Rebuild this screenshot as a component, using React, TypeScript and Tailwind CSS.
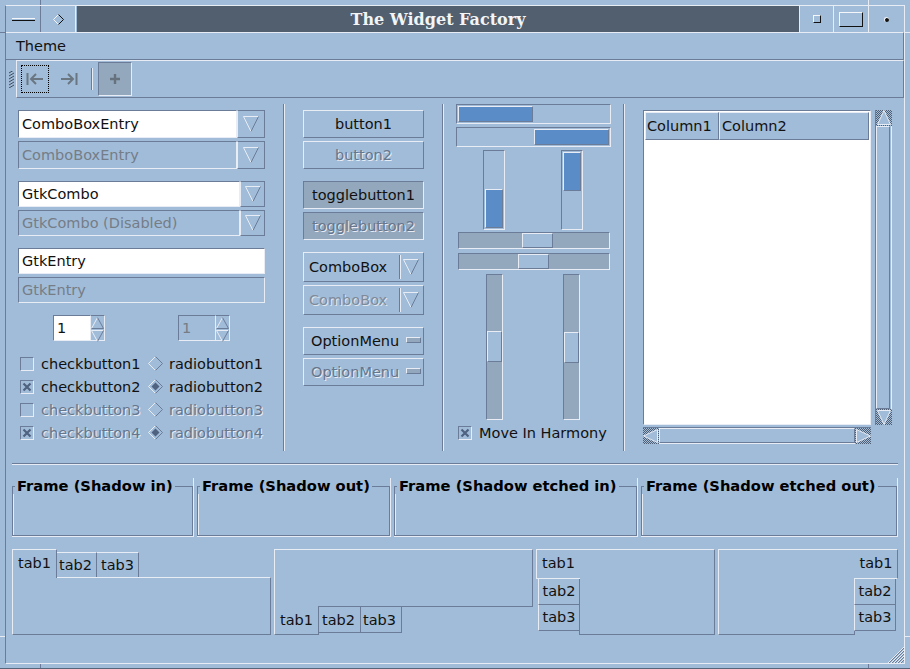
import type { ReactNode } from "react";

// GTK "Redmond"-style bevels
const raised = "border border-t-[#e8ecf5] border-l-[#e8ecf5] border-r-[#6b7c99] border-b-[#6b7c99]";
const sunken = "border border-t-[#6b7c99] border-l-[#6b7c99] border-r-[#e8ecf5] border-b-[#e8ecf5]";
const shadowText = "text-[#66768c] [text-shadow:1px_1px_0_#e8ecf5]";

function DownArrow({ size = 16 }: { size?: number }) {
  return (
    <svg width={size} height={size} viewBox="0 0 16 16" className="shrink-0">
      <path d="M0.5 0.5H15.5" stroke="#e8ecf5" fill="none" />
      <path d="M0.5 0.5L8 15.5" stroke="#e8ecf5" fill="none" />
      <path d="M15.5 0.5L8 15.5" stroke="#6b7c99" fill="none" />
    </svg>
  );
}

function ComboEntry({ text, disabled, entryW, h }: { text: string; disabled?: boolean; entryW: number; h: string }) {
  return (
    <div className={`flex ${h}`}>
      <div
        style={{ width: entryW }}
        className={`${sunken} flex items-center pl-[3px] ${disabled ? "text-[#757d87]" : "bg-white text-[#111]"}`}
      >
        {text}
      </div>
      <div className="flex-1 flex items-center justify-center border border-l-[#e8ecf5] border-t-[#6b7c99] border-r-[#6b7c99] border-b-[#6b7c99]">
        <DownArrow />
      </div>
    </div>
  );
}

function SpinArrow({ up }: { up?: boolean }) {
  return (
    <div className="h-[13px] flex items-center justify-center">
      <svg width="13" height="12" viewBox="0 0 13 12">
        {up ? (
          <>
            <path d="M0.5 11.5L6.5 0.5" stroke="#e8ecf5" fill="none" />
            <path d="M6.5 0.5L12.5 11.5H0.5" stroke="#6b7c99" fill="none" />
          </>
        ) : (
          <>
            <path d="M0.5 0.5H12.5" stroke="#e8ecf5" fill="none" />
            <path d="M0.5 0.5L6.5 11.5" stroke="#e8ecf5" fill="none" />
            <path d="M12.5 0.5L6.5 11.5" stroke="#6b7c99" fill="none" />
          </>
        )}
      </svg>
    </div>
  );
}

function Spin({ disabled }: { disabled?: boolean }) {
  return (
    <div className="flex h-[26px] w-[52px]">
      <div className={`${sunken} w-[38px] flex items-center pl-[3px] ${disabled ? "text-[#757d87]" : "bg-white text-[#111]"}`}>1</div>
      <div className="w-[14px] border-t border-r border-t-[#6b7c99] border-r-[#e8ecf5] border-b border-b-[#e8ecf5]">
        <SpinArrow up />
        <SpinArrow />
      </div>
    </div>
  );
}

function CheckBox({ checked }: { checked?: boolean }) {
  return (
    <div className={`${sunken} w-[14px] h-[14px] flex items-center justify-center shrink-0`}>
      {checked && (
        <svg width="10" height="10" viewBox="0 0 10 10">
          <path d="M1.5 1.5L8.5 8.5M8.5 1.5L1.5 8.5" stroke="#4f6280" strokeWidth="2.2" fill="none" />
        </svg>
      )}
    </div>
  );
}

function Radio({ checked }: { checked?: boolean }) {
  return (
    <svg width="15" height="15" viewBox="0 0 15 15" className="shrink-0">
      <path d="M7.5 0.5L0.5 7.5L7.5 14.5" stroke="#e8ecf5" fill="none" />
      <path d="M7.5 0.5L14.5 7.5L7.5 14.5" stroke="#6b7c99" fill="none" />
      {checked && <path d="M7.5 3.5L11.5 7.5L7.5 11.5L3.5 7.5Z" fill="#4f6280" />}
    </svg>
  );
}

function Btn({ label, disabled, pressed }: { label: string; disabled?: boolean; pressed?: boolean }) {
  return (
    <div
      className={`h-[28px] flex items-center justify-center ${pressed ? sunken + " bg-[#93a8bd]" : raised} ${
        disabled ? shadowText : "text-[#111]"
      }`}
    >
      {label}
    </div>
  );
}

function ComboBox({ disabled }: { disabled?: boolean }) {
  return (
    <div className={`${raised} h-[30px] flex items-center pl-[5px] ${disabled ? "text-[#7f8a98] [text-shadow:1px_1px_0_#dfe6f0]" : "text-[#111]"}`}>
      <span className="flex-1">ComboBox</span>
      <div className="w-[1px] h-[24px] bg-[#6b7c99]" />
      <div className="w-[1px] h-[24px] bg-[#e8ecf5] mr-[2px]" />
      <div className="mr-[4px]">
        <DownArrow />
      </div>
    </div>
  );
}

function OptionMenu({ disabled }: { disabled?: boolean }) {
  return (
    <div className={`${raised} h-[28px] flex items-center pl-[7px] ${disabled ? shadowText : "text-[#111]"}`}>
      <span className="flex-1">OptionMenu</span>
      <div className={`${raised} w-[15px] h-[6px] mr-[2px] mb-[2px] bg-[#93a8bd]`} />
    </div>
  );
}

function VSep() {
  return (
    <div className="flex h-[347px] w-[2px] shrink-0">
      <div className="w-[1px] bg-[#6b7c99]" />
      <div className="w-[1px] bg-[#e8ecf5]" />
    </div>
  );
}

function Hatch({ dir }: { dir: "up" | "down" | "left" | "right" }) {
  const id = `hatch-${dir}`;
  const tri = {
    up: "M8 0.5L14.5 14.5H1.5Z",
    down: "M8 15.5L14.5 1.5H1.5Z",
    left: "M0.5 8L14.5 1.5V14.5Z",
    right: "M15.5 8L1.5 1.5V14.5Z",
  }[dir];
  return (
    <svg width="16" height="16" viewBox="0 0 16 16" className="shrink-0 block">
      <defs>
        <pattern id={id} width="2" height="2" patternUnits="userSpaceOnUse">
          <rect width="2" height="2" fill="#a1bcd8" />
          <rect width="1" height="1" fill="#4f5e73" />
          <rect x="1" y="1" width="1" height="1" fill="#4f5e73" />
        </pattern>
      </defs>
      <rect width="16" height="16" fill={`url(#${id})`} />
      <path d={tri} fill="#a1bcd8" stroke="#e8ecf5" />
    </svg>
  );
}

function Frame({ label, width }: { label: string; width: string }) {
  return (
    <div className={`${width} h-[59px] border-r border-b border-r-[#e8ecf5] border-b-[#e8ecf5] shrink-0`}>
      <fieldset className="h-[58px] border border-[#6b7c99]">
        <legend className="ml-[2px] px-[2px] font-bold text-[14.7px] text-black leading-[16px] whitespace-nowrap">{label}</legend>
        <div className="h-[41px] border-l border-l-[#e8ecf5]" />
      </fieldset>
    </div>
  );
}

function Tab({ className, children }: { className: string; children: ReactNode }) {
  return <div className={`flex items-center justify-center text-[#111] shrink-0 ${className}`}>{children}</div>;
}

export default function App() {
  return (
    <div className="relative w-[910px] h-[669px] overflow-hidden bg-[#a1bcd8] border-b border-b-[#56657a] text-[14.5px] leading-[18px] font-['DejaVu_Sans',sans-serif]">
      {/* frame handles */}
      <div className="absolute left-[40px] top-0 w-[1px] h-[6px] bg-[#6b7c99]" />
      <div className="absolute left-[868px] top-0 w-[1px] h-[6px] bg-[#e8ecf5]" />
      <div className="absolute left-[40px] bottom-0 w-[1px] h-[5px] bg-[#6b7c99]" />
      <div className="absolute left-[868px] bottom-0 w-[1px] h-[5px] bg-[#6b7c99]" />
      <div className="absolute left-0 top-[32px] w-[5px] h-[1px] bg-[#6b7c99]" />
      <div className="absolute right-0 top-[32px] w-[5px] h-[1px] bg-[#e8ecf5]" />
      <div className="absolute left-0 top-[636px] w-[5px] h-[1px] bg-[#e8ecf5]" />
      <div className="absolute right-0 top-[636px] w-[5px] h-[1px] bg-[#e8ecf5]" />

      <div className="relative mt-[5px] ml-[5px] w-[900px] h-[659px] border border-t-[#e8ecf5] border-l-[#6b7c99] border-r-[#e8ecf5] border-b-[#e8ecf5]">
        {/* title bar */}
        <div className="flex h-[26px]">
          <div className="w-[35px] flex items-center justify-center border-r border-r-[#6b7c99]">
            <div className="w-[23px] h-[3px] border-t border-b border-t-[#f4f6fa] border-b-[#111]" />
          </div>
          <div className="w-[35px] flex items-center justify-center border-r border-r-[#e8ecf5]">
            <svg width="11" height="11" viewBox="0 0 11 11">
              <path d="M5.5 0.5L0.5 5.5L5.5 10.5" stroke="#f4f6fa" fill="none" />
              <path d="M5.5 0.5L10.5 5.5L5.5 10.5" stroke="#111" fill="none" />
            </svg>
          </div>
          <div className="w-[1px]" />
          <div className="w-[722px] pt-[2px] bg-[#515f6e] flex items-center justify-center text-[#f2f4f6] font-bold text-[16px] font-['DejaVu_Serif',serif]">
            The Widget Factory
          </div>
          <div className="w-[35px] flex items-center justify-center border-l border-r border-l-[#e8ecf5] border-r-[#e8ecf5]">
            <div className="w-[8px] h-[8px] border border-t-[#f4f6fa] border-l-[#f4f6fa] border-r-[#111] border-b-[#111]" />
          </div>
          <div className="w-[35px] flex items-center justify-center border-r border-r-[#e8ecf5]">
            <div className="w-[24px] h-[15px] border border-t-[#f4f6fa] border-l-[#f4f6fa] border-r-[#111] border-b-[#111]" />
          </div>
          <div className="flex-1 flex items-center justify-center">
            <div className="w-[5px] h-[5px] rounded-full bg-[#111] border-t border-l border-t-[#f4f6fa] border-l-[#f4f6fa]" />
          </div>
        </div>

        {/* menu bar */}
        <div className="h-[28px] flex items-center pl-[10px] border-t border-b border-r border-t-[#e8ecf5] border-b-[#6b7c99] border-r-[#6b7c99] text-[#111]">
          Theme
        </div>

        {/* toolbar */}
        <div className="flex h-[38px]">
          <div className="w-[10px] flex items-center justify-center">
            <svg width="7" height="17" viewBox="0 0 7 17">
              {[0, 3, 6, 9, 12, 15].map((y) => (
                <path key={y} d={`M1 ${y + 2}L6 ${y - 1}`} stroke="#3f4b5b" fill="none" />
              ))}
            </svg>
          </div>
          <div className="flex-1 flex items-center pl-[4px] border-t border-l border-b border-r border-t-[#e8ecf5] border-l-[#e8ecf5] border-b-[#6b7c99] border-r-[#6b7c99]">
            <div className="w-[28px] h-[28px] border border-dotted border-black flex items-center justify-center">
              <svg width="18" height="14" viewBox="0 0 18 14">
                <path d="M1.5 1V13M17 7H5M10 2L5 7L10 12" stroke="#6a7782" strokeWidth="2" fill="none" />
              </svg>
            </div>
            <div className="w-[40px] flex items-center justify-center">
              <svg width="18" height="14" viewBox="0 0 18 14">
                <path d="M16.5 1V13M1 7H13M8 2L13 7L8 12" stroke="#6a7782" strokeWidth="2" fill="none" />
              </svg>
            </div>
            <div className="flex w-[2px] h-[22px] ml-[2px]">
              <div className="w-[1px] bg-[#6b7c99]" />
              <div className="w-[1px] bg-[#e8ecf5]" />
            </div>
            <div className={`${sunken} ml-[5px] w-[34px] h-[34px] bg-[#93a8bd] flex items-center justify-center`}>
              <svg width="12" height="12" viewBox="0 0 12 12">
                <path d="M6 1V11M1 6H11" stroke="#66737f" strokeWidth="2.4" fill="none" />
              </svg>
            </div>
          </div>
        </div>

        {/* widgets */}
        <div className="flex h-[365px] pt-[6px] pl-[12px]">
          <div className="w-[247px] shrink-0 pt-[6px]">
            <ComboEntry text="ComboBoxEntry" entryW={219} h="h-[28px]" />
            <div className="mt-[3px]">
              <ComboEntry text="ComboBoxEntry" entryW={219} h="h-[28px]" disabled />
            </div>
            <div className="mt-[12px]">
              <ComboEntry text="GtkCombo" entryW={222} h="h-[26px]" />
            </div>
            <div className="mt-[3px]">
              <ComboEntry text="GtkCombo (Disabled)" entryW={222} h="h-[26px]" disabled />
            </div>
            <div className={`${sunken} mt-[12px] h-[26px] bg-white text-[#111] flex items-center pl-[3px]`}>GtkEntry</div>
            <div className={`${sunken} mt-[3px] h-[26px] text-[#757d87] flex items-center pl-[3px]`}>GtkEntry</div>
            <div className="flex mt-[12px] pl-[35px] gap-[73px]">
              <Spin />
              <Spin disabled />
            </div>
            <div className="mt-[14px] pl-[2px] flex flex-col gap-[6px]">
              {[
                { n: 1, checked: false, off: false },
                { n: 2, checked: true, off: false },
                { n: 3, checked: false, off: true },
                { n: 4, checked: true, off: true },
              ].map((r) => (
                <div key={r.n} className={`flex items-center h-[17px] ${r.off ? shadowText : "text-[#111]"}`}>
                  <CheckBox checked={r.checked} />
                  <span className="ml-[7px] w-[107px]">checkbutton{r.n}</span>
                  <Radio checked={r.checked} />
                  <span className="ml-[6px]">radiobutton{r.n}</span>
                </div>
              ))}
            </div>
          </div>

          <div className="ml-[18px]">
            <VSep />
          </div>

          <div className="ml-[18px] w-[121px] shrink-0 pt-[6px]">
            <Btn label="button1" />
            <div className="mt-[3px]">
              <Btn label="button2" disabled />
            </div>
            <div className="mt-[12px]">
              <Btn label="togglebutton1" pressed />
            </div>
            <div className="mt-[3px]">
              <Btn label="togglebutton2" pressed disabled />
            </div>
            <div className="mt-[12px]">
              <ComboBox />
            </div>
            <div className="mt-[3px]">
              <ComboBox disabled />
            </div>
            <div className="mt-[12px]">
              <OptionMenu />
            </div>
            <div className="mt-[3px]">
              <OptionMenu disabled />
            </div>
          </div>

          <div className="ml-[18px]">
            <VSep />
          </div>

          <div className="ml-[12px] w-[155px] shrink-0">
            <div className={`${sunken} h-[20px] p-px`}>
              <div className={`${raised} w-[75px] h-full bg-[#5a8dc8]`} />
            </div>
            <div className={`${sunken} h-[20px] p-px mt-[3px] flex justify-end`}>
              <div className={`${raised} w-[75px] h-full bg-[#5a8dc8]`} />
            </div>
            <div className="flex mt-[3px] pl-[27px] gap-[56px]">
              <div className={`${sunken} w-[22px] h-[80px] p-px flex flex-col justify-end`}>
                <div className={`${raised} h-[39px] bg-[#5a8dc8]`} />
              </div>
              <div className={`${sunken} w-[22px] h-[80px] p-px`}>
                <div className={`${raised} h-[39px] bg-[#5a8dc8]`} />
              </div>
            </div>
            <div className={`${sunken} ml-[2px] mt-[2px] w-[152px] h-[17px] bg-[#93a8bd] flex pl-[63px]`}>
              <div className={`${raised} w-[31px] bg-[#a1bcd8]`} />
            </div>
            <div className={`${sunken} ml-[2px] mt-[4px] w-[152px] h-[17px] bg-[#93a8bd] flex pl-[59px]`}>
              <div className={`${raised} w-[31px] bg-[#a1bcd8]`} />
            </div>
            <div className="flex mt-[4px] pl-[30px] gap-[60px]">
              <div className={`${sunken} w-[17px] h-[146px] bg-[#93a8bd] pt-[56px]`}>
                <div className={`${raised} h-[31px] bg-[#a1bcd8]`} />
              </div>
              <div className={`${sunken} w-[17px] h-[146px] bg-[#93a8bd] pt-[57px]`}>
                <div className={`${raised} h-[31px] bg-[#a1bcd8]`} />
              </div>
            </div>
            <div className="flex items-center ml-[2px] mt-[6px] h-[14px] text-[#111]">
              <CheckBox checked />
              <span className="ml-[7px]">Move In Harmony</span>
            </div>
          </div>

          <div className="ml-[12px]">
            <VSep />
          </div>

          <div className="ml-[18px] pt-[6px] shrink-0">
            <div className="flex gap-[4px]">
              <div className={`${sunken} w-[228px] h-[315px] bg-white flex flex-col`}>
                <div className="flex h-[28px] m-px mb-0 text-[#111] bg-[#a1bcd8]">
                  <div className={`${raised} w-[74px] flex items-center pl-[1px]`}>Column1</div>
                  <div className={`${raised} flex-1 flex items-center pl-[2px]`}>Column2</div>
                </div>
              </div>
              <div className="flex flex-col w-[17px] h-[315px] border-l border-r border-l-[#6b7c99] border-r-[#e8ecf5]">
                <Hatch dir="up" />
                <div className={`${raised} flex-1 mr-px`} />
                <Hatch dir="down" />
              </div>
            </div>
            <div className="flex w-[228px] h-[17px] mt-[2px] border-t border-b border-t-[#6b7c99] border-b-[#e8ecf5]">
              <Hatch dir="left" />
              <div className={`${raised} flex-1`} />
              <Hatch dir="right" />
            </div>
          </div>
        </div>

        {/* separator */}
        <div className="ml-[6px] w-[886px] h-[2px] flex flex-col">
          <div className="h-[1px] bg-[#6b7c99]" />
          <div className="h-[1px] bg-[#e8ecf5]" />
        </div>

        {/* frames */}
        <div className="flex gap-[3px] ml-[6px] mt-[13px]">
          <Frame label="Frame (Shadow in)" width="w-[182px]" />
          <Frame label="Frame (Shadow out)" width="w-[194px]" />
          <Frame label="Frame (Shadow etched in)" width="w-[244px]" />
          <Frame label="Frame (Shadow etched out)" width="w-[257px]" />
        </div>

        {/* notebooks */}
        <div className="flex gap-[3px] ml-[6px] mt-[12px] h-[86px]">
          <div className="w-[259px] flex flex-col">
            <div className="flex items-end h-[29px] -mb-px">
              <Tab className="relative z-10 w-[45px] h-[29px] pb-[2px] bg-[#a1bcd8] border-t border-l border-r border-t-[#e8ecf5] border-l-[#e8ecf5] border-r-[#6b7c99]">tab1</Tab>
              <Tab className="w-[40px] h-[26px] pr-[2px] pb-[2px] border-t border-r border-t-[#e8ecf5] border-r-[#6b7c99]">tab2</Tab>
              <Tab className="w-[42px] h-[26px] pb-[2px] border-t border-r border-t-[#e8ecf5] border-r-[#6b7c99]">tab3</Tab>
            </div>
            <div className="flex-1 border border-t-[#e8ecf5] border-l-[#e8ecf5] border-r-[#6b7c99] border-b-[#6b7c99]" />
          </div>

          <div className="w-[259px] flex flex-col">
            <div className="flex-1 border border-t-[#e8ecf5] border-l-[#e8ecf5] border-r-[#6b7c99] border-b-[#6b7c99]" />
            <div className="flex items-start h-[29px] -mt-px">
              <Tab className="relative z-10 w-[45px] h-[29px] bg-[#a1bcd8] border-b border-l border-r border-b-[#6b7c99] border-l-[#e8ecf5] border-r-[#6b7c99]">tab1</Tab>
              <Tab className="w-[42px] h-[27px] pr-[2px] pt-[2px] border-b border-r border-b-[#6b7c99] border-r-[#6b7c99]">tab2</Tab>
              <Tab className="w-[41px] h-[27px] pr-[3px] pt-[2px] border-b border-r border-b-[#6b7c99] border-r-[#6b7c99]">tab3</Tab>
            </div>
          </div>

          <div className="w-[179px] flex">
            <div className="w-[44px] flex flex-col shrink-0">
              <Tab className="relative z-10 h-[30px] pb-[2px] border-t border-l border-b border-t-[#e8ecf5] border-l-[#e8ecf5] border-b-[#e8ecf5]">tab1</Tab>
              <Tab className="ml-[2px] h-[26px] pb-[2px] border-l border-b border-r border-l-[#e8ecf5] border-b-[#6b7c99] border-r-[#6b7c99]">tab2</Tab>
              <Tab className="ml-[2px] h-[26px] pb-[2px] border-l border-b border-r border-l-[#e8ecf5] border-b-[#6b7c99] border-r-[#6b7c99]">tab3</Tab>
              <div className="flex-1 border-r border-r-[#6b7c99]" />
            </div>
            <div className="flex-1 border-t border-r border-b border-t-[#e8ecf5] border-r-[#6b7c99] border-b-[#6b7c99]" />
          </div>

          <div className="w-[180px] flex">
            <div className="flex-1 border-t border-l border-b border-t-[#e8ecf5] border-l-[#e8ecf5] border-b-[#6b7c99]" />
            <div className="w-[44px] flex flex-col shrink-0">
              <Tab className="relative z-10 h-[30px] pb-[2px] pl-[1px] border-t border-r border-b border-t-[#e8ecf5] border-r-[#6b7c99] border-b-[#e8ecf5]">tab1</Tab>
              <Tab className="mr-[2px] h-[26px] pb-[2px] border-l border-b border-r border-l-[#e8ecf5] border-b-[#6b7c99] border-r-[#6b7c99]">tab2</Tab>
              <Tab className="mr-[2px] h-[26px] pb-[2px] border-l border-b border-r border-l-[#e8ecf5] border-b-[#6b7c99] border-r-[#6b7c99]">tab3</Tab>
              <div className="flex-1 border-l border-l-[#6b7c99]" />
            </div>
          </div>
        </div>

        {/* resize grip */}
        <svg width="17" height="17" viewBox="0 0 17 17" className="absolute right-0 bottom-0">
          {[0, 3, 6, 9, 12].map((o) => (
            <g key={o}>
              <path d={`M${o + 1} 17L17 ${o + 1}`} stroke="#e8ecf5" fill="none" />
              <path d={`M${o + 2} 17L17 ${o + 2}`} stroke="#6b7c99" fill="none" />
            </g>
          ))}
        </svg>
      </div>
    </div>
  );
}
